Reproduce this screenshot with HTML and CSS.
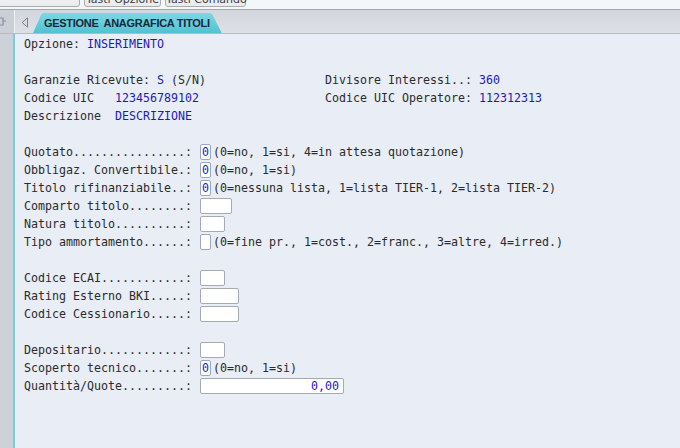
FILE: index.html
```html
<!DOCTYPE html>
<html lang="it">
<head>
<meta charset="utf-8">
<title>Gestione Anagrafica Titoli</title>
<link rel="stylesheet" href="styles.css">
</head>
<body>
<div class="topbar">
  <div class="btn btn-first">Tasti Utente</div>
  <div class="btn btn-2">Tasti Opzione</div>
  <div class="btn btn-3">Tasti Comando</div>
</div>
<div class="tabbar">
  <div class="tab-side">
    <svg class="pin" width="9" height="12" viewBox="0 0 9 12"><path d="M0 2h6v7H0M6 5h3" fill="none" stroke="#8a8f96" stroke-width="1.2"/><path d="M2 3v5" stroke="#a9aeb5" stroke-width="1"/></svg>
  </div>
  <div class="tab-arrow">
    <svg width="8" height="11" viewBox="0 0 8 11"><path d="M6.5 0.8 L1.2 5.5 L6.5 10.2 Z" fill="none" stroke="#7d8288" stroke-width="1"/></svg>
  </div>
  <div class="tab">GESTIONE&nbsp; ANAGRAFICA TITOLI</div>
</div>
<div class="main">
  <div class="side"></div>
  <div class="content">
    <div class="row">Opzione: <span class="v">INSERIMENTO</span></div>
    <div class="row"></div>
    <div class="row"><span class="c1">Garanzie Ricevute: <span class="v">S</span> (S/N)</span>Divisore Interessi..: <span class="v">360</span></div>
    <div class="row"><span class="c1">Codice UIC   <span class="v">123456789102</span></span>Codice UIC Operatore: <span class="v">112312313</span></div>
    <div class="row">Descrizione  <span class="v">DESCRIZIONE</span></div>
    <div class="row"></div>
    <div class="row">Quotato................: <span class="f w1"><span class="v">0</span></span><span class="hint">(0=no, 1=si, 4=in attesa quotazione)</span></div>
    <div class="row">Obbligaz. Convertibile.: <span class="f w1"><span class="v">0</span></span><span class="hint">(0=no, 1=si)</span></div>
    <div class="row">Titolo rifinanziabile..: <span class="f w1"><span class="v">0</span></span><span class="hint">(0=nessuna lista, 1=lista TIER-1, 2=lista TIER-2)</span></div>
    <div class="row">Comparto titolo........: <span class="f w4"></span></div>
    <div class="row">Natura titolo..........: <span class="f w3"></span></div>
    <div class="row">Tipo ammortamento......: <span class="f w1"></span><span class="hint">(0=fine pr., 1=cost., 2=franc., 3=altre, 4=irred.)</span></div>
    <div class="row"></div>
    <div class="row">Codice ECAI............: <span class="f w3"></span></div>
    <div class="row">Rating Esterno BKI.....: <span class="f w5"></span></div>
    <div class="row">Codice Cessionario.....: <span class="f w5"></span></div>
    <div class="row"></div>
    <div class="row">Depositario............: <span class="f w3"></span></div>
    <div class="row">Scoperto tecnico.......: <span class="f w1"><span class="v">0</span></span><span class="hint">(0=no, 1=si)</span></div>
    <div class="row">Quantità/Quote.........: <span class="f wq"><span class="v">0,00</span></span></div>
  </div>
</div>
</body>
</html>
```

FILE: styles.css
```css
html, body {
  margin: 0;
  padding: 0;
}
body {
  width: 680px;
  height: 448px;
  overflow: hidden;
  background: #e9edf5;
  font-family: "DejaVu Sans Mono", "Liberation Mono", monospace;
}

.topbar {
  height: 7px;
  padding-bottom: 2px;
  border-bottom: 1px solid #a3a7ac;
  background: #f3f7f7;
  overflow: hidden;
  display: flex;
  align-items: flex-end;
  gap: 4px;
}
.btn {
  flex: none;
  height: 20px;
  box-sizing: border-box;
  padding: 5px 0 0;
  border: 1px solid #a9acb0;
  border-radius: 3px;
  background: linear-gradient(#fbfbfb, #e9eaeb);
  font-family: "DejaVu Sans", Tahoma, sans-serif;
  font-size: 11px;
  line-height: 13px;
  color: #3c3c3c;
  text-align: center;
  white-space: nowrap;
}
.btn-first {
  width: 150px;
  margin-left: -70px;
  text-align: left;
  padding-left: 4px;
}
.btn-2 { width: 77px; }
.btn-3 { width: 81px; }

.tabbar {
  height: 23px;
  border-bottom: 1px solid #7fd2dc;
  background: linear-gradient(#d3d7dd, #dde1e7);
  display: flex;
  align-items: flex-end;
}
.tab-side {
  align-self: stretch;
  width: 15px;
  background: #cbd0d7;
  border-right: 1px solid #eef1f4;
  box-sizing: border-box;
}
.pin {
  display: block;
  margin: 6px 0 0 -3px;
}
.tab-arrow {
  align-self: stretch;
  width: 18px;
  display: flex;
  align-items: center;
  padding-left: 6px;
  padding-top: 1px;
  box-sizing: border-box;
}
.tab {
  height: 20px;
  padding: 0 12px 0 11px;
  background: linear-gradient(#7dd8e3, #52c2d1);
  clip-path: polygon(0 100%, 8px 2px, 10px 0, calc(100% - 11px) 0, calc(100% - 9px) 2px, 100% 100%);
  font-family: "Liberation Sans", Arial, sans-serif;
  font-weight: bold;
  font-size: 11px;
  letter-spacing: -0.3px;
  line-height: 20px;
  color: #17283a;
  white-space: nowrap;
}

.main {
  display: flex;
  height: 414px;
}
.side {
  width: 13px;
  flex: none;
  background: #cdd2d9;
  border-right: 2px solid #7fcbd5;
}
.content {
  flex: 1;
  padding: 1px 0 0 9px;
  font-size: 11.63px;
  color: #2b2b2b;
}
.row {
  height: 18px;
  line-height: 18px;
  white-space: pre;
}
.c1 {
  display: inline-block;
  width: 43ch;
}
.v {
  color: #1c1cb4;
}
.f {
  display: inline-block;
  vertical-align: top;
  height: 16px;
  margin: 1px 0 0 1px;
  box-sizing: border-box;
  border: 1px solid #a6aab2;
  border-radius: 2px;
  background: #fff;
  line-height: 14px;
  text-align: center;
}
.w1 { width: 11px; border-color: #9ea6c0; }
.w3 { width: 25px; }
.w4 { width: 32px; }
.w5 { width: 39px; }
.wq {
  width: 144px;
  text-align: right;
  padding-right: 4px;
}
.hint {
  margin-left: 2px;
}
```
